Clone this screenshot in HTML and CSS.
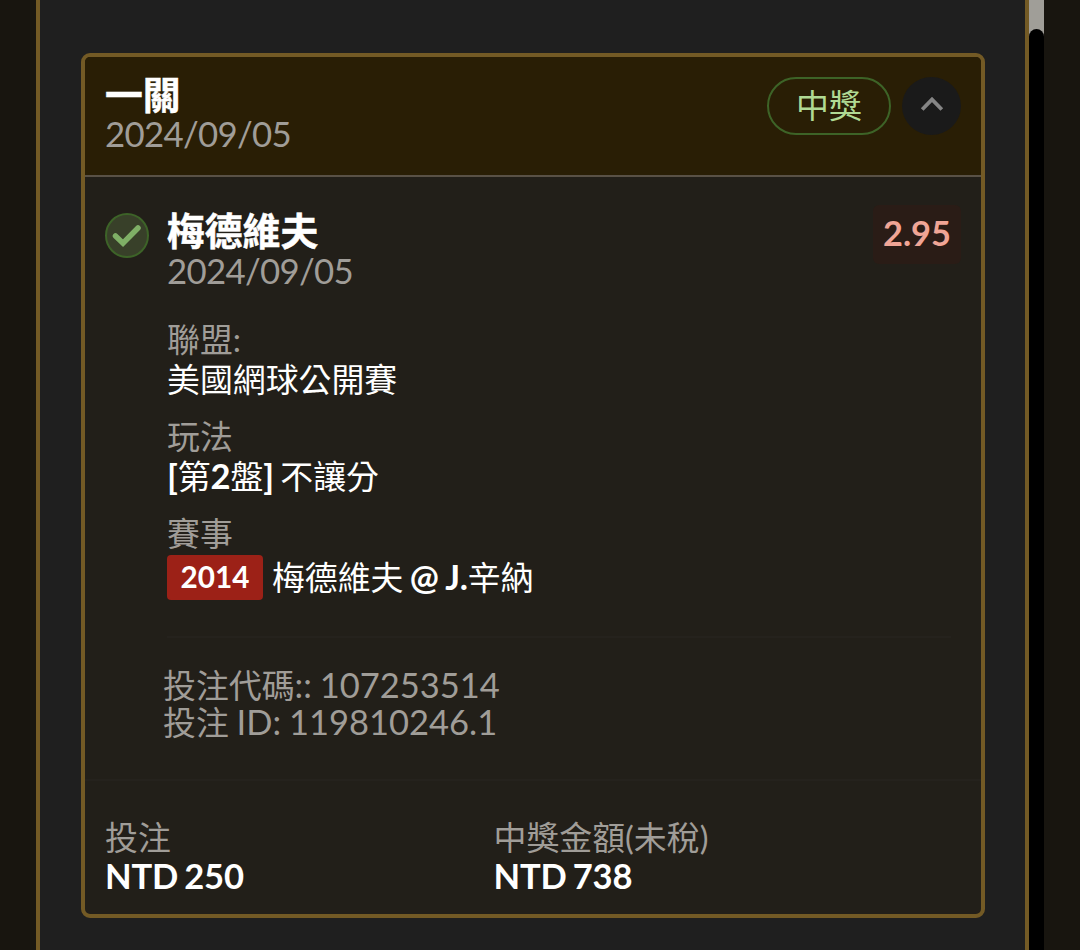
FILE: index.html
```html
<!DOCTYPE html>
<html lang="zh-Hant">
<head>
  <meta charset="UTF-8" />
  <meta name="viewport" content="width=device-width, initial-scale=1.0">
  <title>投注紀錄</title>
  <link rel="stylesheet" href="styles.css">
</head>
<body>
  <div class="page">
    <main class="panel">
      <section class="bet-card">
        <header class="card-header">
          <div>
            <h2 class="title">一關</h2>
            <div class="date">2024/09/05</div>
          </div>
          <div class="actions">
            <span class="status">中獎</span>
            <button class="toggle" aria-label="收合">
              <svg width="24" height="16" viewBox="0 0 24 16"><path d="M2.2 13.5 L12 3.5 L21.8 13.5" /></svg>
            </button>
          </div>
        </header>

        <div class="card-body">
          <svg class="check" width="44" height="45" viewBox="0 0 44 45">
            <ellipse cx="22" cy="22.5" rx="21" ry="21.5" />
            <path d="M10.5 23 L18 30.2 L33 15" />
          </svg>
          <div class="selection">
            <div class="selection-top">
              <div>
                <h3 class="title">梅德維夫</h3>
                <div class="date">2024/09/05</div>
              </div>
              <span class="odds">2.95</span>
            </div>
            <dl class="details">
              <dt>聯盟:</dt>
              <dd>美國網球公開賽</dd>
              <dt>玩法</dt>
              <dd><b>[</b>第<b>2</b>盤<b>] </b>不讓分</dd>
              <dt>賽事</dt>
              <dd class="match"><span class="match-no">2014</span><span>梅德維夫<b> @ J.</b>辛納</span></dd>
            </dl>
            <div class="codes">
              <div>投注代碼<span class="num">:: 107253514</span></div>
              <div>投注<span class="num"> ID: 119810246.1</span></div>
            </div>
          </div>
        </div>

        <footer class="card-footer">
          <div>
            <div class="label">投注</div>
            <div class="amount">NTD 250</div>
          </div>
          <div>
            <div class="label">中獎金額(未稅)</div>
            <div class="amount">NTD 738</div>
          </div>
        </footer>
      </section>
    </main>
    <div class="scrollbar"><div class="thumb"></div></div>
  </div>
</body>
</html>
```
FILE: styles.css
```css
:root {
  --bg: #18150f;
  --panel: #1f1f1f;
  --gold: #735a25;
  --card: #221f19;
  --muted: #a09d98;
}
* { box-sizing: border-box; }
body {
  margin: 0;
  background: var(--bg);
  color: #fff;
  font-family: Lato, "Noto Sans CJK TC", sans-serif;
  font-size: 32.9px;
  overflow: hidden;
}
h2, h3, dl, dd { margin: 0; }
.page {
  display: flex;
  height: 950px;
  padding: 0 36px;
}
.panel {
  width: 993px;
  padding: 53px 40px 0 41px;
  background: var(--panel);
  border: solid var(--gold);
  border-width: 0 4px;
}
.scrollbar {
  width: 15px;
  background: #a09e98;
  padding-top: 29px;
}
.thumb {
  height: 921px;
  background: #000;
  border-radius: 8px 8px 0 0;
}
.bet-card {
  display: flex;
  flex-direction: column;
  width: 904px;
  height: 865px;
  border: 4px solid var(--gold);
  border-radius: 9px;
  background: var(--card);
  overflow: hidden;
}
.card-header {
  display: flex;
  justify-content: space-between;
  height: 120px;
  padding: 20px 20px 0;
  background: #291e05;
  border-bottom: 2px solid #595146;
}
.title {
  font-size: 37.8px;
  font-weight: 700;
  line-height: 36px;
  -webkit-text-stroke: 0.5px #fff;
}
.date {
  margin-top: 1px;
  font-size: 34.8px;
  line-height: 40px;
  letter-spacing: -0.7px;
  color: var(--muted);
}
.selection .date { margin-top: 2px; }
.actions {
  display: flex;
  gap: 11px;
}
.status {
  width: 124px;
  height: 58px;
  border: 2px solid #3d6327;
  border-radius: 29px;
  color: #b0da94;
  line-height: 53px;
  text-align: center;
}
.toggle {
  display: flex;
  align-items: center;
  justify-content: center;
  width: 59px;
  height: 58px;
  padding: 0 0 5px;
  border: none;
  border-radius: 50%;
  background: #1a1a1a;
}
.toggle path {
  fill: none;
  stroke: #858585;
  stroke-width: 3.8;
}
.card-body {
  display: flex;
  gap: 18px;
  height: 604px;
  padding: 36px 20px 0;
  border-bottom: 2px solid #25221d;
}
.check ellipse {
  fill: #384029;
  stroke: #3d6328;
  stroke-width: 2;
}
.check path {
  fill: none;
  stroke: #7fb066;
  stroke-width: 5.5;
  stroke-linecap: round;
}
.selection { flex: 1; }
.selection-top {
  display: flex;
  justify-content: space-between;
}
.odds {
  height: 59px;
  margin-top: -8px;
  padding: 0 10px;
  border-radius: 6px;
  background: #2a1c16;
  color: #f0a596;
  font-size: 34.4px;
  font-weight: 700;
  line-height: 56px;
}
.details {
  margin-top: 29px;
  line-height: 40px;
}
.details dt { color: var(--muted); }
.details dd { margin-bottom: 17px; }
.details b {
  font-size: 34.6px;
  line-height: 1;
  letter-spacing: -0.2px;
  word-spacing: -1.8px;
}
.details .match {
  display: flex;
  align-items: center;
  gap: 9px;
  height: 45px;
  margin: 1px 0 0;
}
.match-no {
  height: 45px;
  padding: 0 13.5px;
  border-radius: 4px;
  background: #9c2117;
  font-size: 29.7px;
  font-weight: 700;
  line-height: 44px;
}
.codes {
  margin: 36px 10px 0 0;
  padding-top: 29px;
  border-top: 2px solid #25221d;
  line-height: 37px;
  color: var(--muted);
}
.codes div { margin-left: -4px; }
.num {
  font-size: 34.5px;
  line-height: 1;
  word-spacing: -1px;
}
.card-footer {
  display: grid;
  grid-template-columns: 388.5px 1fr;
  padding: 38px 20px 0;
}
.label {
  height: 38px;
  line-height: 38px;
  color: var(--muted);
}
.amount {
  font-size: 34.6px;
  font-weight: 700;
  line-height: 37px;
  letter-spacing: -0.25px;
  word-spacing: -1.8px;
}
```
